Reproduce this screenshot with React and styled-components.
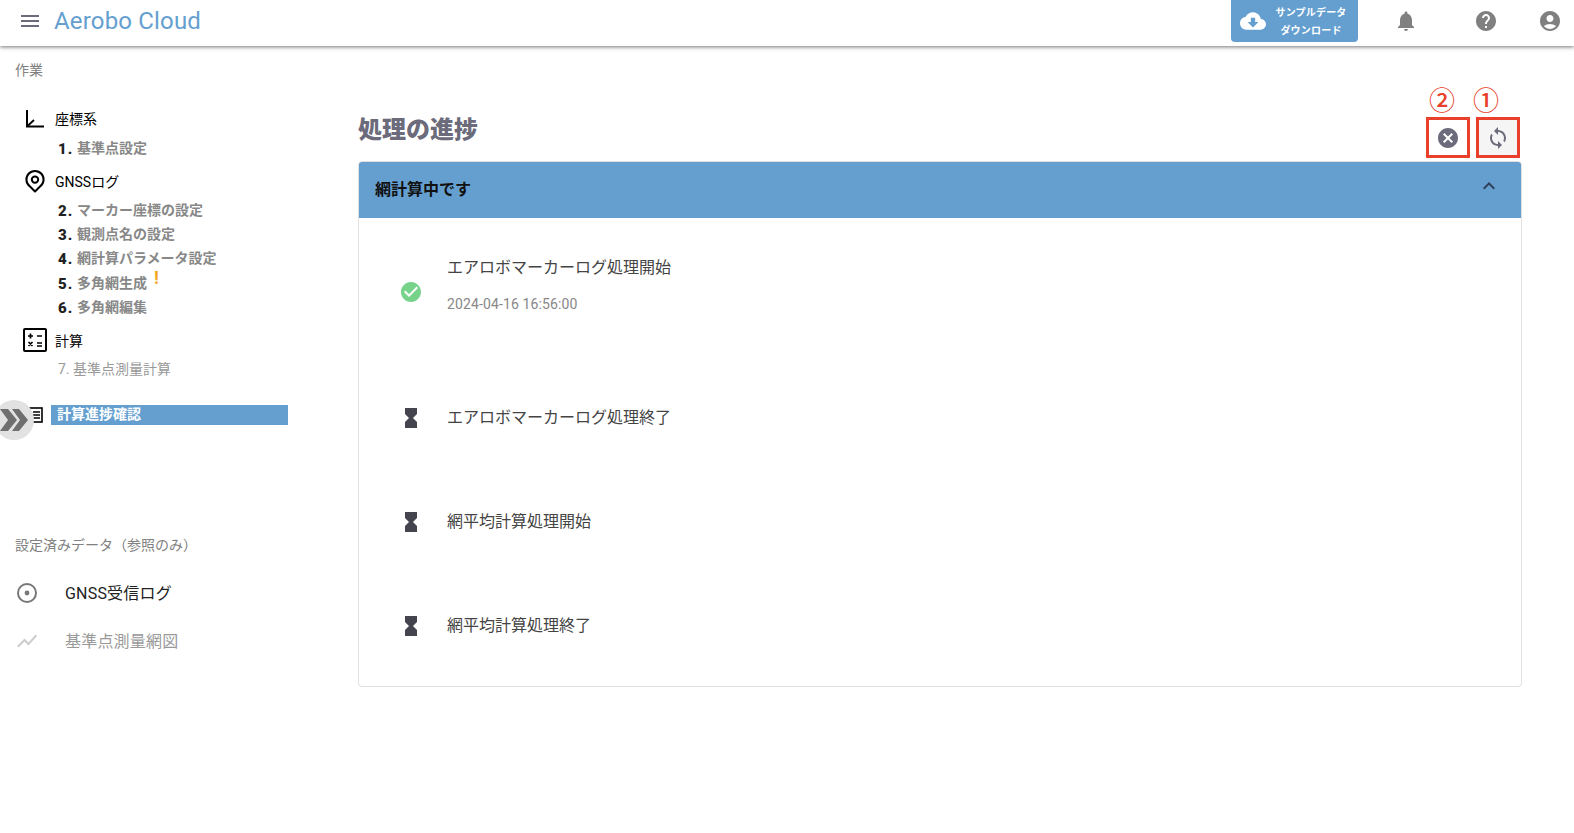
import React from "react";
import styled, { createGlobalStyle } from "styled-components";
import {
  MdMenu,
  MdCloudDownload,
  MdNotifications,
  MdHelp,
  MdAccountCircle,
  MdCancel,
  MdSync,
  MdCheckCircle,
  MdHourglassFull,
  MdExpandLess,
  MdShowChart,
} from "react-icons/md";

const GlobalStyle = createGlobalStyle`
  html, body {
    margin: 0;
    padding: 0;
    background: #fff;
    font-family: Roboto, "Noto Sans CJK JP", sans-serif;
  }
  * { box-sizing: border-box; }
`;

const Page = styled.div`
  width: 100%;
  height: 100vh;
  display: flex;
  flex-direction: column;
  overflow: hidden;
`;

const Header = styled.header`
  height: 46px;
  flex: none;
  display: flex;
  align-items: flex-start;
  padding-left: 18px;
  background: #fff;
  box-shadow: 0 1px 4px rgba(0, 0, 0, 0.55);
  position: relative;
  z-index: 2;
`;

const MenuButton = styled.div`
  height: 42px;
  display: flex;
  align-items: center;
  color: #6b6b7b;
  font-size: 24px;
`;

const Brand = styled.div`
  margin-left: 12px;
  line-height: 42px;
  font-size: 24px;
  letter-spacing: 0.17px;
  color: #659fd0;
`;

const SampleButton = styled.div`
  margin-left: auto;
  margin-right: 8px;
  width: 127px;
  height: 42px;
  display: flex;
  align-items: center;
  padding-left: 9px;
  gap: 9px;
  background: #659fd0;
  border-radius: 0 0 4px 4px;
  color: #fff;
  font-size: 26px;
`;

const SampleLabel = styled.div`
  padding-top: 1px;
  font-size: 10px;
  font-weight: 700;
  line-height: 18px;
  text-align: center;
  width: 72px;
  letter-spacing: 0.2px;
`;

const HeaderIcon = styled.div`
  width: ${(p) => p.$width}px;
  height: 42px;
  display: flex;
  align-items: center;
  justify-content: center;
  color: #808080;
  font-size: 24px;
`;

const Body = styled.div`
  flex: 1;
  display: flex;
  min-height: 0;
`;

const Sidebar = styled.aside`
  width: 358px;
  flex: none;
  padding-top: 14px;
`;

const SectionLabel = styled.div`
  margin-left: 15px;
  line-height: 20px;
  font-size: 14px;
  color: #808080;
`;

const Steps = styled.div`
  margin-top: 26px;
  display: flex;
  flex-direction: column;
`;

const Group = styled.div`
  display: flex;
  flex-direction: column;
  margin-bottom: 10px;
`;

const GroupHead = styled.div`
  height: 24px;
  margin-bottom: ${(p) => (p.$loose ? 5 : 4)}px;
  padding-left: 23px;
  display: flex;
  align-items: center;
  gap: 8px;
  font-size: 14px;
  color: #000;
`;

const Step = styled.div`
  height: 24px;
  margin-top: ${(p) => (p.$warn ? 1 : 0)}px;
  padding-left: 58px;
  display: flex;
  align-items: center;
  font-size: 14px;
  font-weight: 700;
  color: #888;
`;

const StepNumber = styled.span`
  width: 19px;
  margin-top: 3px;
  font-size: 15px;
  font-weight: 900;
  letter-spacing: 1px;
  color: #222;
`;

const PlainStep = styled(Step)`
  font-weight: 400;
  color: #999;
`;

const Warn = styled.span`
  margin-left: 7px;
  margin-top: -9px;
  font-size: 18px;
  font-weight: 700;
  color: #f5a623;
`;

const ActiveRow = styled.div`
  position: relative;
  margin-top: 15px;
  height: 20px;
  padding-left: 29px;
  display: flex;
  align-items: center;
  gap: 8px;
  color: #000;
`;

const ActiveLabel = styled.div`
  width: 237px;
  height: 20px;
  padding-left: 6px;
  line-height: 19px;
  background: #659fd0;
  color: #fff;
  font-size: 14px;
  font-weight: 700;
`;

const CurrentMark = styled.div`
  position: absolute;
  left: -6px;
  top: -5px;
  width: 40px;
  height: 40px;
  border-radius: 50%;
  background: #e2e2e2;
  display: flex;
  align-items: center;
  justify-content: center;
`;

const RefLabel = styled(SectionLabel)`
  margin-top: 110px;
`;

const RefList = styled.div`
  margin-top: 13px;
  display: flex;
  flex-direction: column;
`;

const RefItem = styled.div`
  height: 48px;
  padding-left: 15px;
  display: flex;
  align-items: center;
  gap: 26px;
  font-size: 16px;
  letter-spacing: 0.2px;
  color: ${(p) => (p.$muted ? "#999" : "#222")};
`;

const RefIcon = styled.div`
  width: 24px;
  height: 24px;
  margin-top: 2px;
  font-size: 24px;
  color: ${(p) => (p.$muted ? "#ccc" : "#777")};
`;

const Main = styled.main`
  flex: 1;
  min-width: 0;
  padding: 40px 52px 0 0;
`;

const TitleRow = styled.div`
  display: flex;
  align-items: flex-end;
  justify-content: space-between;
  padding-right: 2px;
  margin-bottom: 3px;
`;

const Title = styled.h1`
  margin: 0 0 10px;
  line-height: 36px;
  font-size: 24px;
  font-weight: 900;
  color: #6b6b7b;
`;

const Actions = styled.div`
  display: flex;
  gap: 6px;
`;

const Action = styled.div`
  width: 44px;
  display: flex;
  flex-direction: column;
  align-items: center;
  gap: 3px;
`;

const Marker = styled.div`
  height: 28px;
  line-height: 30px;
  font-size: 26px;
  font-weight: 500;
  color: #e8402a;
  transform: translateX(${(p) => p.$shift}px);
`;

const ActionBox = styled.div`
  width: 44px;
  height: 41px;
  border: 3px solid #e8402a;
  display: flex;
  align-items: center;
  justify-content: center;
  font-size: 24px;
  color: #6b6b7b;
  background: ${(p) => (p.$active ? "#f5f5f5" : "#fff")};
`;

const Panel = styled.section`
  border: 1px solid #e0e0e0;
  border-radius: 4px;
  overflow: hidden;
`;

const PanelHead = styled.div`
  height: 56px;
  padding: 0 20px 5px 16px;
  display: flex;
  align-items: center;
  justify-content: space-between;
  background: #659fd0;
  font-size: 16px;
  font-weight: 700;
  color: #111;
`;

const Collapse = styled.div`
  height: 24px;
  margin-bottom: 3px;
  font-size: 24px;
  color: #2f4058;
`;

const Timeline = styled.div`
  padding: 23px 0 8px 40px;
  display: flex;
  flex-direction: column;
`;

const TimelineRow = styled.div`
  height: 104px;
  margin-bottom: ${(p) => (p.$first ? 21 : 0)}px;
  display: flex;
  align-items: center;
  gap: 24px;
`;

const RowIcon = styled.div`
  width: 24px;
  height: 24px;
  margin-bottom: ${(p) => (p.$done ? 3 : 0)}px;
  font-size: 24px;
  color: ${(p) => (p.$done ? "#77d38a" : "#44444f")};
`;

const RowText = styled.div`
  display: flex;
  flex-direction: column;
  gap: 12px;
  margin-bottom: ${(p) => (p.$raised ? 15 : 0)}px;
`;

const RowTitle = styled.div`
  line-height: 24px;
  font-size: 16px;
  color: #444;
`;

const RowDate = styled.div`
  line-height: 24px;
  font-size: 14px;
  letter-spacing: 0.12px;
  color: #888;
`;

const AxisIcon = () => (
  <svg width="24" height="24" viewBox="0 0 24 24" fill="none" stroke="#000" strokeWidth="2">
    <path d="M4 4v16.5h17" />
    <path d="M4.5 20l6.5-6" strokeWidth="1.8" />
  </svg>
);

const PinIcon = () => (
  <svg width="24" height="24" viewBox="0 0 24 24" fill="none" stroke="#000" strokeWidth="2">
    <path d="M12 22.5l-5-5a8.6 8.6 0 1 1 10 0z" strokeLinejoin="round" />
    <circle cx="12" cy="10.6" r="3.2" />
  </svg>
);

const CalcIcon = () => (
  <svg width="24" height="24" viewBox="0 0 24 24" fill="none" stroke="#000">
    <rect x="1" y="1" width="22" height="22" rx="1" strokeWidth="2" />
    <path d="M5 8h5M7.5 5.5v5M14 8h5M14 15h5M14 18h5M5.5 14l4 4M9.5 14l-4 4" strokeWidth="1.7" />
  </svg>
);

const ListIcon = () => (
  <svg width="14" height="16" viewBox="0 0 14 16" fill="none" stroke="#000" strokeWidth="1.6">
    <rect x="1" y="1" width="12" height="14" />
    <path d="M4 5h7M4 8h7M4 11h7" />
  </svg>
);

const DoubleChevron = () => (
  <svg width="30" height="26" viewBox="0 0 30 26" fill="#6f6f6f">
    <polygon points="1,2 9,2 18,13 9,24 1,24 9,13" />
    <polygon points="13,2 20,2 29,13 20,24 13,24 21,13" />
  </svg>
);

const RingIcon = () => (
  <svg width="24" height="24" viewBox="0 0 24 24" fill="none" stroke="currentColor" strokeWidth="2">
    <circle cx="12" cy="12" r="9" />
    <circle cx="12" cy="12" r="2.4" fill="currentColor" stroke="none" />
  </svg>
);

const coordSteps = [["1.", "基準点設定"]];
const gnssSteps = [
  ["2.", "マーカー座標の設定"],
  ["3.", "観測点名の設定"],
  ["4.", "網計算パラメータ設定"],
  ["5.", "多角網生成", true],
  ["6.", "多角網編集"],
];

const timeline = [
  { title: "エアロボマーカーログ処理開始", date: "2024-04-16 16:56:00", done: true },
  { title: "エアロボマーカーログ処理終了" },
  { title: "網平均計算処理開始" },
  { title: "網平均計算処理終了" },
];

const renderSteps = (steps) =>
  steps.map(([num, label, warn]) => (
    <Step key={num} $warn={warn}>
      <StepNumber>{num}</StepNumber>
      {label}
      {warn && <Warn>!</Warn>}
    </Step>
  ));

const App = () => {
  return (
    <Page>
      <GlobalStyle />
      <Header>
        <MenuButton>
          <MdMenu />
        </MenuButton>
        <Brand>Aerobo Cloud</Brand>
        <SampleButton>
          <MdCloudDownload />
          <SampleLabel>
            サンプルデータ
            <br />
            ダウンロード
          </SampleLabel>
        </SampleButton>
        <HeaderIcon $width={80}>
          <MdNotifications />
        </HeaderIcon>
        <HeaderIcon $width={80}>
          <MdHelp />
        </HeaderIcon>
        <HeaderIcon $width={48}>
          <MdAccountCircle />
        </HeaderIcon>
      </Header>
      <Body>
        <Sidebar>
          <SectionLabel>作業</SectionLabel>
          <Steps>
            <Group>
              <GroupHead $loose>
                <AxisIcon />
                座標系
              </GroupHead>
              {renderSteps(coordSteps)}
            </Group>
            <Group>
              <GroupHead>
                <PinIcon />
                GNSSログ
              </GroupHead>
              {renderSteps(gnssSteps)}
            </Group>
            <Group>
              <GroupHead>
                <CalcIcon />
                計算
              </GroupHead>
              <PlainStep>7. 基準点測量計算</PlainStep>
            </Group>
            <ActiveRow>
              <ListIcon />
              <ActiveLabel>計算進捗確認</ActiveLabel>
              <CurrentMark>
                <DoubleChevron />
              </CurrentMark>
            </ActiveRow>
          </Steps>
          <RefLabel>設定済みデータ（参照のみ）</RefLabel>
          <RefList>
            <RefItem>
              <RefIcon>
                <RingIcon />
              </RefIcon>
              GNSS受信ログ
            </RefItem>
            <RefItem $muted>
              <RefIcon $muted>
                <MdShowChart />
              </RefIcon>
              基準点測量網図
            </RefItem>
          </RefList>
        </Sidebar>
        <Main>
          <TitleRow>
            <Title>処理の進捗</Title>
            <Actions>
              <Action>
                <Marker $shift={-6}>②</Marker>
                <ActionBox>
                  <MdCancel />
                </ActionBox>
              </Action>
              <Action>
                <Marker $shift={-12}>①</Marker>
                <ActionBox $active>
                  <MdSync />
                </ActionBox>
              </Action>
            </Actions>
          </TitleRow>
          <Panel>
            <PanelHead>
              網計算中です
              <Collapse>
                <MdExpandLess />
              </Collapse>
            </PanelHead>
            <Timeline>
              {timeline.map((row, i) => (
                <TimelineRow key={row.title} $first={i === 0}>
                  <RowIcon $done={row.done}>
                    {row.done ? <MdCheckCircle /> : <MdHourglassFull />}
                  </RowIcon>
                  <RowText $raised={row.date}>
                    <RowTitle>{row.title}</RowTitle>
                    {row.date && <RowDate>{row.date}</RowDate>}
                  </RowText>
                </TimelineRow>
              ))}
            </Timeline>
          </Panel>
        </Main>
      </Body>
    </Page>
  );
};

export default App;
